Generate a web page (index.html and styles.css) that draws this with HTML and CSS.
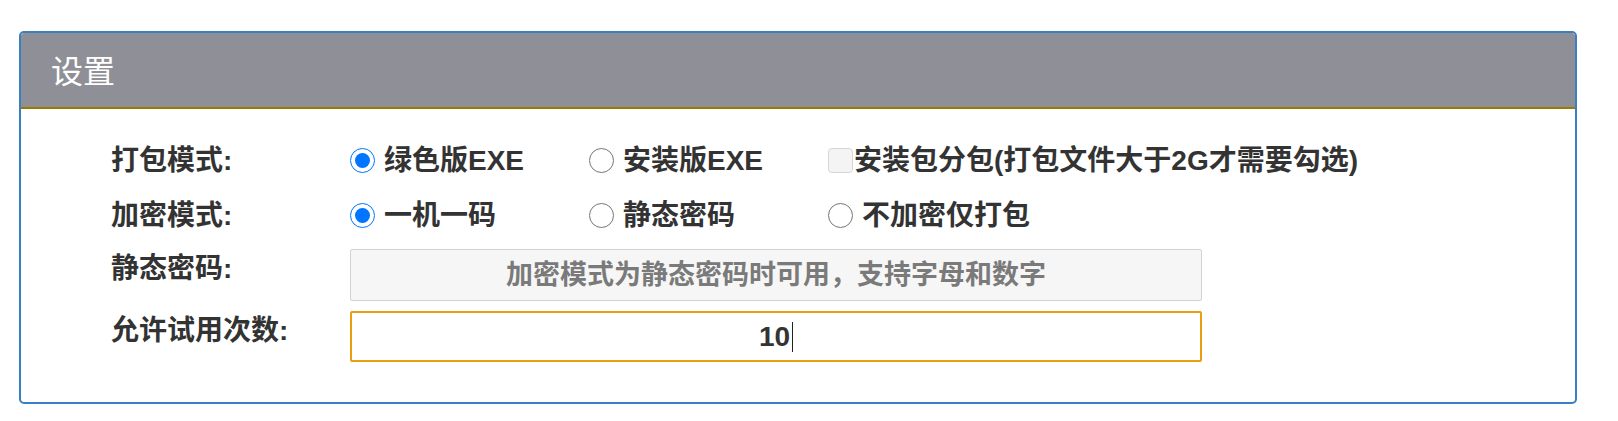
FILE: index.html
```html
<!DOCTYPE html>
<html lang="zh-CN">
<head>
<meta charset="utf-8">
<title>设置</title>
<link rel="stylesheet" href="styles.css">
</head>
<body>
<div class="panel">
  <div class="panel-head">设置</div>
  <div class="panel-body">
    <div class="row row-opt">
      <div class="label">打包模式:</div>
      <label class="opt"><input type="radio" name="pack" checked><span>绿色版EXE</span></label>
      <label class="opt"><input type="radio" name="pack"><span>安装版EXE</span></label>
      <label class="opt opt-check"><input type="checkbox" class="chk" disabled><span>安装包分包(打包文件大于2G才需要勾选)</span></label>
    </div>
    <div class="row row-opt">
      <div class="label">加密模式:</div>
      <label class="opt"><input type="radio" name="enc" checked><span>一机一码</span></label>
      <label class="opt"><input type="radio" name="enc"><span>静态密码</span></label>
      <label class="opt"><input type="radio" name="enc"><span>不加密仅打包</span></label>
    </div>
    <div class="row row-input">
      <div class="label">静态密码:</div>
      <input class="field field-disabled" type="text" disabled placeholder="加密模式为静态密码时可用，支持字母和数字">
    </div>
    <div class="row row-input">
      <div class="label">允许试用次数:</div>
      <div class="field field-focus"><span class="val">10</span><span class="caret"></span></div>
    </div>
  </div>
</div>
</body>
</html>
```

FILE: styles.css
```css
* { box-sizing: border-box; }
body {
  margin: 0;
  background: #fff;
  font-family: "Liberation Sans", "Noto Sans CJK SC", sans-serif;
  color: #333;
}
.panel {
  margin: 31px 41px 0 19px;
  height: 373px;
  border: 2px solid #3a7fc1;
  border-radius: 5px;
  overflow: hidden;
}
.panel-head {
  height: 76px;
  background: #8f8f97;
  border-bottom: 2px solid #9a7b00;
  color: #fff;
  font-size: 32px;
  line-height: 72px;
  padding-left: 30px;
  font-family: "Noto Sans CJK SC", sans-serif;
}
.panel-body {
  padding: 24px 0 0 90px;
}
.row {
  display: flex;
}
.row-opt {
  height: 55px;
  align-items: center;
}
.row-input {
  margin-top: 6px;
}
.row-input + .row-input {
  margin-top: 10px;
}
.label {
  width: 239px;
  flex: none;
  font-size: 28px;
  font-weight: 700;
  line-height: 36px;
}
.row-input .label {
  padding-top: 2px;
}
.opt {
  width: 239px;
  flex: none;
  display: flex;
  align-items: center;
  font-size: 28px;
  font-weight: 700;
  white-space: nowrap;
  line-height: 36px;
}
.opt input[type="radio"] {
  width: 25px;
  height: 25px;
  margin: 0 9px 0 0;
  flex: none;
}
.opt-check { width: auto; }
.chk {
  appearance: none;
  -webkit-appearance: none;
  width: 25px;
  height: 25px;
  margin: 0 1px 0 0;
  background: #f4f4f4;
  border: 1px solid #d6d6d6;
  border-radius: 4px;
  flex: none;
}
.field {
  width: 852px;
  height: 52px;
  font-family: "Liberation Sans", "Noto Sans CJK SC", sans-serif;
  font-size: 27px;
  font-weight: 700;
  text-align: center;
  border-radius: 2px;
  color: #333;
}
.field-disabled {
  background: #f6f6f6;
  border: 1px solid #d2d2d2;
  outline: none;
  padding: 0;
}
.field-disabled::placeholder {
  color: #7a7a7a;
  opacity: 1;
}
.field-focus {
  height: 51px;
  border: 2px solid #e8a010;
  display: flex;
  align-items: center;
  justify-content: center;
}
.val { font-size: 28px; }
.caret {
  display: inline-block;
  width: 1px;
  height: 30px;
  background: #222;
  margin-left: 2px;
}
```
